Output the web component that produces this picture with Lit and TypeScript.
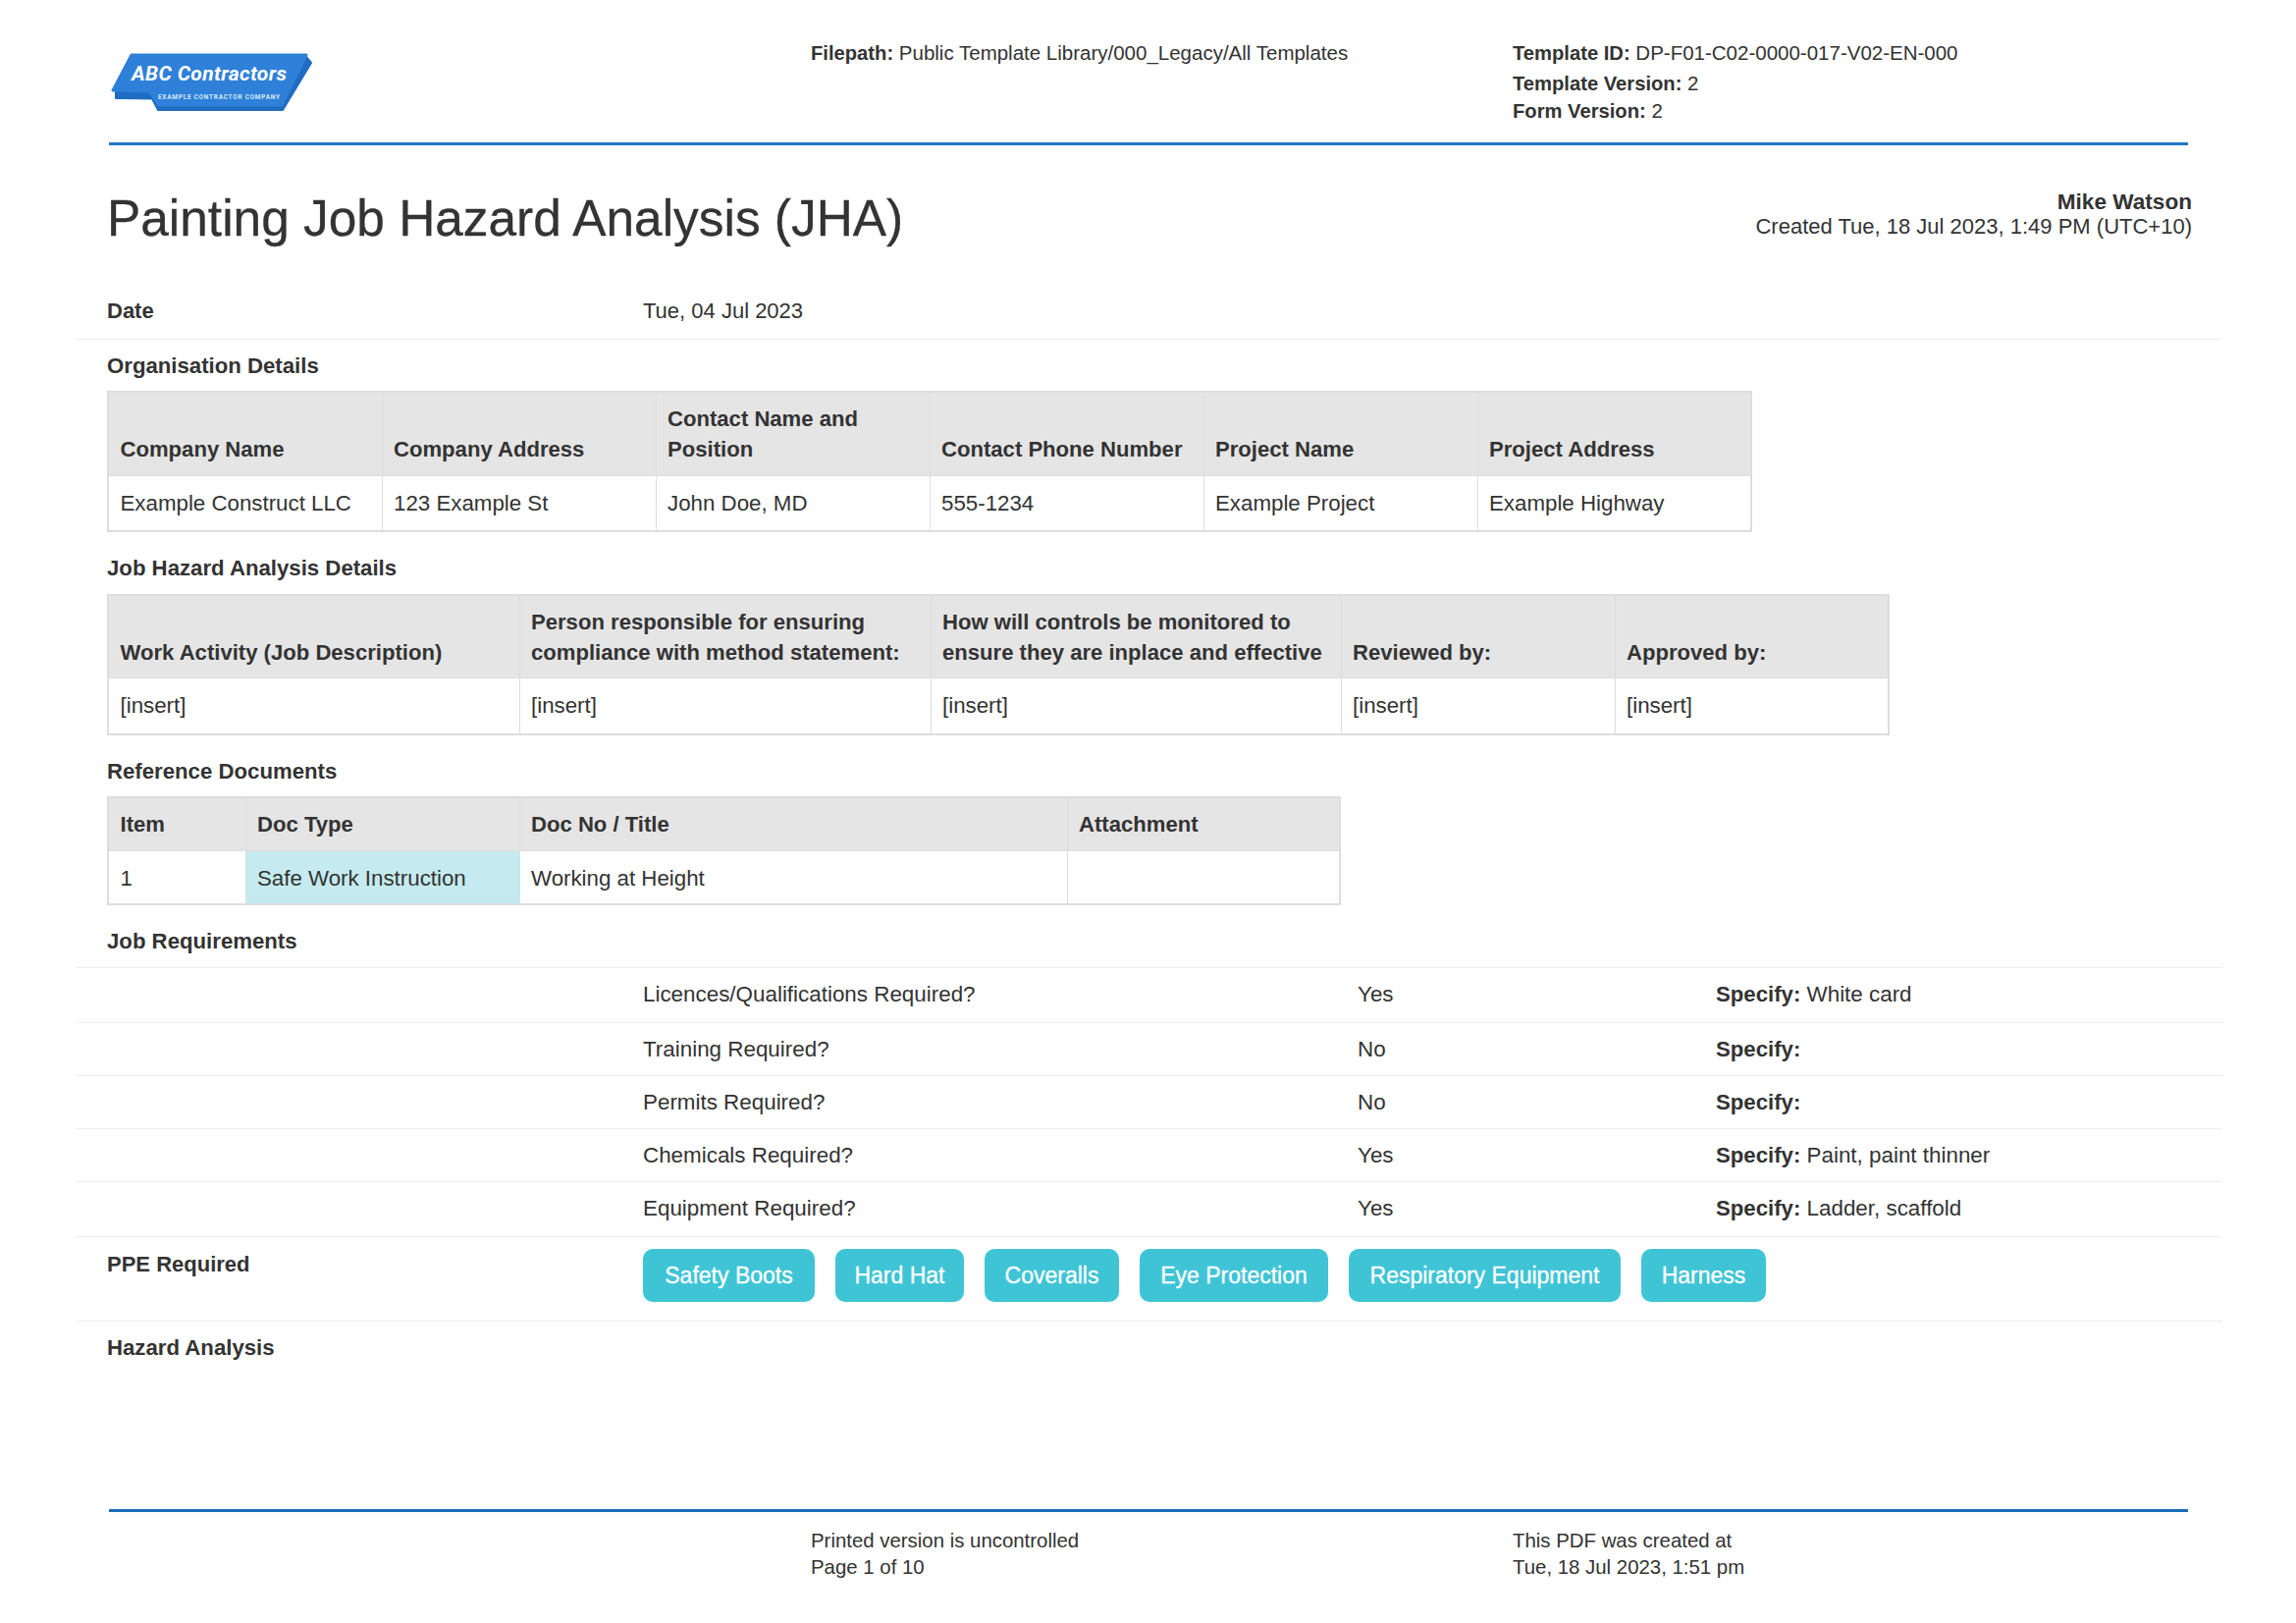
import { LitElement, html, css } from "lit";
import { customElement } from "lit/decorators.js";

const orgCols = [279, 279, 279, 279, 279, 279];
const jhaCols = [419, 419, 418, 279, 279];
const refCols = [140, 279, 558, 278];

const reqs = [
  ["Licences/Qualifications Required?", "Yes", "White card"],
  ["Training Required?", "No", ""],
  ["Permits Required?", "No", ""],
  ["Chemicals Required?", "Yes", "Paint, paint thinner"],
  ["Equipment Required?", "Yes", "Ladder, scaffold"],
];
const ppe: [string, number][] = [
  ["Safety Boots", 175],
  ["Hard Hat", 131],
  ["Coveralls", 137],
  ["Eye Protection", 192],
  ["Respiratory Equipment", 277],
  ["Harness", 127],
];

@customElement("app-root")
export class AppRoot extends LitElement {
  static styles = css`
    :host { display: block; width: 2339px; height: 1653px; background: #fff; overflow: hidden; color: #333;
      font-family: "Liberation Sans", Arial, sans-serif; font-size: 22px; line-height: 31.4px; }
    .page { padding-left: 78px; width: 2186px; }
    .head { margin-left: 33px; width: 2118px; height: 147.5px; box-sizing: border-box; border-bottom: 3px solid #2176cc;
      display: grid; grid-template-columns: 715px 715px 1fr; font-size: 20.5px; line-height: 27px; }
    .head b { font-size: 20.2px; }
    .logo { display: block; width: 250px; height: 80px; margin: 40px 0 0 -21px; }
    .fp { padding-top: 40px; }
    .tmpl { padding-top: 40px; }
    .tmpl div:first-child { margin-bottom: 3px; }
    b { font-weight: 700; }
    .title-row { display: flex; justify-content: space-between; padding: 45.5px 31px 0 31px; height: 152px; box-sizing: border-box; }
    h1 { margin: -1px 0 0; font-size: 51.4px; line-height: 60px; font-weight: 400; -webkit-text-stroke: .3px #333; }
    .author { text-align: right; line-height: 25px; }
    .author b { font-size: 22.6px; }
    .date { display: grid; grid-template-columns: 546px 1fr; padding: 1px 31px 0; height: 44px; border-bottom: 1.5px solid #eee; box-sizing: content-box; }
    .sec { padding-left: 31px; font-weight: 700; font-size: 22.2px; }
    .s1 { margin-top: 11px; }
    .s2 { margin-top: 21px; }
    table { margin: 10px 0 0 31px; border-collapse: collapse; table-layout: fixed; border: 2px solid #ddd; }
    th, td { border: 1.5px solid #ddd; padding: 12px 11px 12px 11.5px; text-align: left; vertical-align: bottom; box-sizing: border-box; overflow: hidden; }
    th { background: #e5e5e5; font-weight: 700; font-size: 22.1px; padding-top: 11px; padding-bottom: 10px; }
    td { font-size: 22.3px; }
    td.t { background: #c5ebf0; border-left-color: #c5ebf0; border-right-color: #c5ebf0; }
    .ref th { padding: 10.5px 11.5px; }
    .ref td { padding: 12px 11.5px 10px; }
    .rows { margin-top: 11px; }
    .row { display: grid; grid-template-columns: 546px 728px 365px 1fr; padding: 11px 31px 0; box-sizing: border-box;
      border-top: 1.5px solid #eee; font-size: 22.4px; }
    .row b { font-size: 22.2px; }
    .ppe { display: grid; grid-template-columns: 546px 1fr; padding: 11.5px 31px 0; height: 87px; box-sizing: border-box;
      border-top: 1.5px solid #eee; border-bottom: 1.5px solid #eee; }
    .chips { display: flex; gap: 21px; }
    .chip { background: #3fc4d6; color: #fff; border-radius: 10px; height: 54px; line-height: 54px; text-align: center; box-sizing: border-box;
      font-size: 23px; -webkit-text-stroke: .3px #fff; }
    .haz { padding-top: 10.5px; }
    .foot { margin: 0 0 0 33px; position: absolute; top: 1536.5px; width: 2118px; border-top: 3px solid #1a6fb9; display: grid;
      grid-template-columns: 715px 715px 1fr; font-size: 20.4px; line-height: 27px; padding-top: 16.5px; }
  `;

  private cols(w: number[]) {
    return html`<colgroup>${w.map((x) => html`<col style="width:${x}px" />`)}</colgroup>`;
  }

  render() {
    return html`<div class="page">
      <div class="head">
        <svg class="logo" viewBox="0 0 250 80">
          <path fill="#1f6cc0" stroke="#1f6cc0" stroke-width="2" stroke-linejoin="round" d="M28 50 L28 60 L65 60.5 L71 72 L198 72 L227 24 L222 18 L180 18 Z"/>
          <path fill="#2e80d8" stroke="#2e80d8" stroke-width="3" stroke-linejoin="round" d="M44 16 L222 16 L197 67 L72 67 L62 53 L25 52 Z"/>
          <text x="44" y="42" font-family="Roboto, sans-serif" font-weight="700" font-style="italic" font-size="21" fill="#fff" textLength="158">ABC Contractors</text>
          <text x="71" y="61" font-family="Roboto, sans-serif" font-weight="700" font-size="6.5" fill="#d6e8fb" textLength="124">EXAMPLE CONTRACTOR COMPANY</text>
        </svg>
        <div class="fp"><b>Filepath:</b> Public Template Library/000_Legacy/All Templates</div>
        <div class="tmpl">
          <div><b>Template ID:</b> DP-F01-C02-0000-017-V02-EN-000</div>
          <div><b>Template Version:</b> 2</div>
          <div><b>Form Version:</b> 2</div>
        </div>
      </div>
      <div class="title-row">
        <h1>Painting Job Hazard Analysis (JHA)</h1>
        <div class="author"><b>Mike Watson</b><br />Created Tue, 18 Jul 2023, 1:49 PM (UTC+10)</div>
      </div>
      <div class="date"><b>Date</b><span>Tue, 04 Jul 2023</span></div>

      <div class="sec s1">Organisation Details</div>
      <table style="width:${orgCols.reduce((a, b) => a + b)}px">
        ${this.cols(orgCols)}
        <tr><th>Company Name</th><th>Company Address</th><th>Contact Name and Position</th><th>Contact Phone Number</th><th>Project Name</th><th>Project Address</th></tr>
        <tr><td>Example Construct LLC</td><td>123 Example St</td><td>John Doe, MD</td><td>555-1234</td><td>Example Project</td><td>Example Highway</td></tr>
      </table>

      <div class="sec s2">Job Hazard Analysis Details</div>
      <table style="width:${jhaCols.reduce((a, b) => a + b)}px">
        ${this.cols(jhaCols)}
        <tr><th>Work Activity (Job Description)</th><th>Person responsible for ensuring compliance with method statement:</th><th>How will controls be monitored to ensure they are inplace and effective</th><th>Reviewed by:</th><th>Approved by:</th></tr>
        <tr><td>[insert]</td><td>[insert]</td><td>[insert]</td><td>[insert]</td><td>[insert]</td></tr>
      </table>

      <div class="sec s2">Reference Documents</div>
      <table class="ref" style="width:${refCols.reduce((a, b) => a + b)}px">
        ${this.cols(refCols)}
        <tr><th>Item</th><th>Doc Type</th><th>Doc No / Title</th><th>Attachment</th></tr>
        <tr><td>1</td><td class="t">Safe Work Instruction</td><td>Working at Height</td><td></td></tr>
      </table>

      <div class="sec s2">Job Requirements</div>
      <div class="rows">
        ${reqs.map(
          (r, i) => html`<div class="row" style="height:${i === 0 || i === 4 ? 56 : 54}px">
            <span></span><span>${r[0]}</span><span>${r[1]}</span><span><b>Specify:</b> ${r[2]}</span>
          </div>`
        )}
      </div>
      <div class="ppe">
        <b>PPE Required</b>
        <div class="chips">${ppe.map(([p, w]) => html`<span class="chip" style="width:${w}px">${p}</span>`)}</div>
      </div>
      <div class="sec haz">Hazard Analysis</div>
      <div class="foot">
        <span></span>
        <div>Printed version is uncontrolled<br />Page 1 of 10</div>
        <div>This PDF was created at<br />Tue, 18 Jul 2023, 1:51 pm</div>
      </div>
    </div>`;
  }
}
